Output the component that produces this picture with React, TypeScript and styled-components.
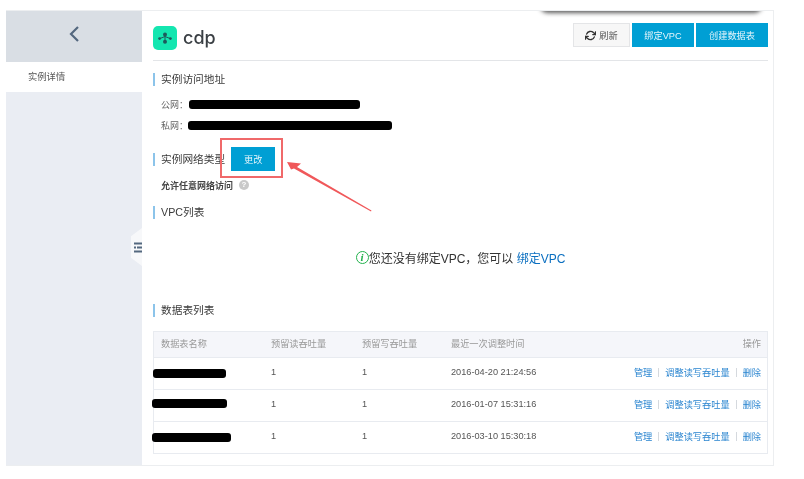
import styled, { createGlobalStyle } from 'styled-components';
import { FiRefreshCw } from 'react-icons/fi';

const GlobalStyle = createGlobalStyle`
  html, body {
    margin: 0;
    padding: 0;
    background: #fff;
    font-family: "Liberation Sans", "Noto Sans CJK SC", sans-serif;
  }
`;

const tables = [
  { blot: 73, offset: -8, lift: -3, time: '2016-04-20 21:24:56' },
  { blot: 75, offset: -9, lift: 1, time: '2016-01-07 15:31:16' },
  { blot: 79, offset: -9, lift: -3, time: '2016-03-10 15:30:18' }
];

export default function App() {
  return (
    <>
      <GlobalStyle />
      <Page>
        <Frame>
          <Sidebar>
            <BackBar>
              <svg width="12" height="18" viewBox="0 0 12 18">
                <path d="M10 2 L3 9 L10 16" fill="none" stroke="#54687f" strokeWidth="2.2" />
              </svg>
            </BackBar>
            <NavItem>实例详情</NavItem>
          </Sidebar>
          <Handle>
            <svg width="8" height="11" viewBox="0 0 8 11">
              <path d="M0 0.5h8v2H0zM0 4.5h2v2H0zM3 4.5h5v2H3zM0 8.5h8v2H0z" fill="#54687f" />
            </svg>
          </Handle>
          <Main>
            <Header>
              <Brand>
                <Logo>
                  <svg width="14" height="12" viewBox="0 0 14 12">
                    <path d="M7 2.5V10M2 6.5L7 4.5L12 6.5" fill="none" stroke="#1d5a5c" strokeWidth="1" />
                    <circle cx="7" cy="2.5" r="2" fill="#1d5a5c" />
                    <circle cx="7" cy="9.8" r="2" fill="#1d5a5c" />
                    <circle cx="1.6" cy="6.6" r="1.4" fill="#1d5a5c" />
                    <circle cx="12.4" cy="6.6" r="1.4" fill="#1d5a5c" />
                  </svg>
                </Logo>
                <BrandName>cdp</BrandName>
              </Brand>
              <Actions>
                <RefreshButton>
                  <FiRefreshCw size={11} color="#333" strokeWidth={3} />
                  刷新
                </RefreshButton>
                <PrimaryButton $width={62}>绑定VPC</PrimaryButton>
                <PrimaryButton $width={72}>创建数据表</PrimaryButton>
              </Actions>
            </Header>

            <SectionTitle $top={12}>实例访问地址</SectionTitle>
            <AddressRow $top={11}>
              <AddressLabel>公网：</AddressLabel>
              <Blot $width={171} $offset={1} />
            </AddressRow>
            <AddressRow $top={6}>
              <AddressLabel>私网：</AddressLabel>
              <Blot $width={204} $offset={0} />
            </AddressRow>

            <NetworkRow>
              <SectionTitle $top={0}>实例网络类型</SectionTitle>
              <ChangeButton>更改</ChangeButton>
            </NetworkRow>
            <AccessRow>
              允许任意网络访问
              <HelpDot>?</HelpDot>
            </AccessRow>

            <SectionTitle $top={15}>VPC列表</SectionTitle>
            <EmptyNote>
              <InfoMark>i</InfoMark>您还没有绑定VPC，您可以 <NoteLink>绑定VPC</NoteLink>
            </EmptyNote>

            <SectionTitle $top={39}>数据表列表</SectionTitle>
            <Table>
              <HeaderRow>
                <Cell>数据表名称</Cell>
                <Cell>预留读吞吐量</Cell>
                <Cell>预留写吞吐量</Cell>
                <Cell>最近一次调整时间</Cell>
                <OpsCell>操作</OpsCell>
              </HeaderRow>
              {tables.map((row) => (
                <BodyRow key={row.time}>
                  <Cell>
                    <Blot $width={row.blot} $offset={row.offset} $lift={row.lift} />
                  </Cell>
                  <Cell>1</Cell>
                  <Cell>1</Cell>
                  <Cell>{row.time}</Cell>
                  <OpsCell>
                    <OpLink>管理</OpLink>
                    <OpSep />
                    <OpLink>调整读写吞吐量</OpLink>
                    <OpSep />
                    <OpLink>删除</OpLink>
                  </OpsCell>
                </BodyRow>
              ))}
            </Table>
          </Main>
          <TopShadow />
          <Callout />
          <Arrow width="90" height="56" viewBox="0 0 90 56">
            <path d="M1 1 L15 2.5 L11 6 L85.5 49.5 L85 50.5 L8 7.5 L5 8.5 Z" fill="#f0585a" />
          </Arrow>
        </Frame>
      </Page>
    </>
  );
}

const Page = styled.div`
  width: 804px;
  height: 479px;
  padding: 10px 0 0 6px;
  box-sizing: border-box;
  overflow: hidden;
  filter: blur(0.45px);
`;

const Frame = styled.div`
  position: relative;
  display: flex;
  width: 768px;
  height: 456px;
  box-sizing: border-box;
  border: 1px solid #eceef0;
  border-left: 0;
  overflow: hidden;
`;

const Sidebar = styled.aside`
  width: 136px;
  flex: none;
  background: #eaedf3;
  margin-top: -1px;
`;

const BackBar = styled.div`
  height: 52px;
  background: #d9dee4;
  display: flex;
  align-items: center;
  justify-content: center;
  padding-bottom: 4px;
  box-sizing: border-box;
  svg {
    margin-left: -1px;
  }
`;

const NavItem = styled.div`
  height: 30px;
  background: #fff;
  padding-left: 22px;
  font-size: 9.3px;
  line-height: 30px;
  color: #555;
`;

const Handle = styled.div`
  position: absolute;
  left: 125px;
  top: 217px;
  width: 11px;
  height: 38px;
  background: #f7f8fa;
  clip-path: polygon(100% 0, 100% 100%, 0 78%, 0 22%);
  display: flex;
  align-items: center;
  justify-content: flex-end;
`;

const Main = styled.main`
  flex: 1;
  min-width: 0;
  padding: 0 5px 0 11px;
`;

const Header = styled.header`
  display: flex;
  align-items: center;
  justify-content: space-between;
  height: 50px;
  padding-top: 3px;
  box-sizing: border-box;
  border-bottom: 1px solid #e3e5e8;
`;

const Brand = styled.div`
  display: flex;
  align-items: center;
  gap: 6px;
  margin-top: 2px;
`;

const Logo = styled.div`
  width: 24px;
  height: 24px;
  border-radius: 5px;
  background: #14e6b0;
  display: flex;
  align-items: center;
  justify-content: center;
`;

const BrandName = styled.span`
  font-family: "Inter", "Liberation Sans", sans-serif;
  font-size: 18px;
  font-weight: 500;
  color: #3a3f44;
  margin-bottom: 2px;
`;

const Actions = styled.div`
  display: flex;
  gap: 2px;
  margin-top: -4px;
`;

const RefreshButton = styled.button`
  width: 57px;
  height: 24px;
  padding: 0;
  border: 1px solid #e4e5e7;
  background: #f7f7f7;
  color: #555;
  font: inherit;
  font-size: 9.2px;
  display: flex;
  align-items: center;
  justify-content: center;
  gap: 3px;
`;

const PrimaryButton = styled.button<{ $width: number }>`
  width: ${(p) => p.$width}px;
  height: 24px;
  padding: 0;
  border: 0;
  background: #009fd4;
  color: #e4f5fb;
  font: inherit;
  font-size: 9.2px;
`;

const SectionTitle = styled.h3<{ $top: number }>`
  margin: ${(p) => p.$top}px 0 0;
  height: 13px;
  padding-left: 6px;
  border-left: 2px solid #8cc4ea;
  font-size: 10.7px;
  font-weight: 400;
  line-height: 13px;
  color: #3a3a3a;
`;

const AddressRow = styled.div<{ $top: number }>`
  display: flex;
  align-items: center;
  height: 15px;
  margin-top: ${(p) => p.$top}px;
  padding-left: 8px;
`;

const AddressLabel = styled.span`
  width: 27px;
  font-size: 9px;
  color: #666;
`;

const Blot = styled.span<{ $width: number; $offset: number; $lift?: number }>`
  display: block;
  width: ${(p) => p.$width}px;
  height: 9px;
  margin-left: ${(p) => p.$offset}px;
  margin-bottom: ${(p) => p.$lift ?? 0}px;
  border-radius: 3px;
  background: #000;
`;

const NetworkRow = styled.div`
  display: flex;
  align-items: center;
  gap: 6px;
  height: 24px;
  margin-top: 14px;
`;

const ChangeButton = styled.button`
  width: 44px;
  height: 24px;
  padding: 0;
  border: 0;
  background: #009fd4;
  color: #e4f5fb;
  font: inherit;
  font-size: 9.2px;
`;

const AccessRow = styled.div`
  display: flex;
  align-items: center;
  gap: 6px;
  height: 12px;
  margin-top: 8px;
  padding-left: 8px;
  font-size: 9px;
  font-weight: 700;
  color: #444;
`;

const HelpDot = styled.span`
  width: 10px;
  height: 10px;
  border-radius: 50%;
  background: #c9c9c9;
  color: #fff;
  font-size: 8px;
  line-height: 10px;
  text-align: center;
`;

const EmptyNote = styled.div`
  display: flex;
  align-items: center;
  justify-content: center;
  height: 16px;
  margin-top: 30px;
  font-size: 12px;
  color: #333;
  white-space: pre;
`;

const InfoMark = styled.span`
  width: 11px;
  height: 11px;
  border: 1px solid #22b14c;
  border-radius: 50%;
  color: #22b14c;
  font-family: "Liberation Serif", serif;
  font-size: 11px;
  font-style: italic;
  font-weight: 700;
  line-height: 11px;
  text-align: center;
`;

const NoteLink = styled.a`
  color: #0b6fc0;
`;

const Table = styled.div`
  margin-top: 14px;
  border: 1px solid #e8ebf0;
`;

const HeaderRow = styled.div`
  display: grid;
  grid-template-columns: 110px 91px 89px 1fr 160px;
  align-items: center;
  height: 26px;
  box-sizing: border-box;
  padding: 0 6px 3px 7px;
  background: #f5f6fa;
  border-bottom: 1px solid #e8ebf0;
  font-size: 9.2px;
  color: #999;
`;

const BodyRow = styled(HeaderRow)`
  height: 32px;
  background: #fff;
  color: #555;
  &:last-child {
    height: 31px;
    border-bottom: 0;
  }
`;

const Cell = styled.div`
  white-space: nowrap;
`;

const OpsCell = styled.div`
  display: flex;
  align-items: center;
  justify-content: flex-end;
  gap: 6px;
`;

const OpLink = styled.a`
  color: #2a85d0;
`;

const OpSep = styled.span`
  width: 1px;
  height: 9px;
  background: #d5d9de;
`;

const TopShadow = styled.div`
  position: absolute;
  left: 534px;
  top: -12px;
  width: 222px;
  height: 12px;
  border-radius: 0 0 8px 8px;
  box-shadow: 0 2px 4px rgba(40, 40, 40, 0.75);
`;

const Callout = styled.div`
  position: absolute;
  left: 214px;
  top: 127px;
  width: 63px;
  height: 40px;
  box-sizing: border-box;
  border: 2px solid #f0696a;
`;

const Arrow = styled.svg`
  position: absolute;
  left: 280px;
  top: 150px;
`;
